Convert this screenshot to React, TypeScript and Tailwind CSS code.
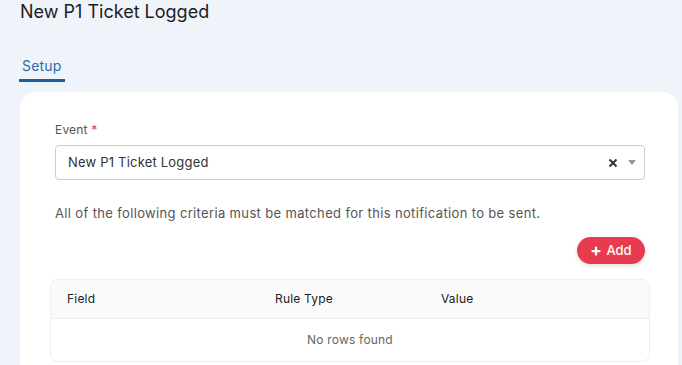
import { Plus } from "lucide-react";

export default function App() {
  return (
    <div
      className="h-[365px] w-[682px] overflow-hidden bg-[#eff3fa] text-[#222]"
      style={{ fontFamily: "Inter, 'Noto Sans', sans-serif" }}
    >
      <h1 className="pl-5 pt-[1px] text-[18px] leading-[22px] text-[#1d1d1d]">New P1 Ticket Logged</h1>

      <div className="mt-[30px] pl-[19px]">
        <div className="inline-block w-[46px] border-b-[3px] border-[#1f5f9e] pb-[3px] pl-[3px] text-[14px] leading-[20px] tracking-[0.2px] text-[#2b6cab]">
          Setup
        </div>
      </div>

      <div className="ml-5 mr-1 mt-[10px] h-[300px] rounded-2xl bg-white pl-[35px] pr-[33px] pt-[30px]">
        <label className="block text-[12px] leading-[16px] tracking-[0.2px] text-[#555]">
          Event <span className="text-[#e2344a]">*</span>
        </label>
        <div className="mt-[7px] flex h-[35px] items-center rounded border border-[#cccccc] pl-3 pr-2">
          <span className="flex-1 text-[13px] tracking-[0.2px] text-[#333]">New P1 Ticket Logged</span>
          <svg width="10" height="10" viewBox="0 0 10 10" className="text-[#333]">
            <path d="M1.5 1.5l7 7M8.5 1.5l-7 7" stroke="currentColor" strokeWidth="2" />
          </svg>
          <span className="ml-[10px] h-0 w-0 border-x-[4px] border-t-[5px] border-x-transparent border-t-[#999]" />
        </div>

        <p className="mt-[24px] text-[13px] leading-[18px] tracking-[0.35px] text-[#555]">
          All of the following criteria must be matched for this notification to be sent.
        </p>

        <div className="mt-[15px] flex justify-end">
          <button className="flex h-[27px] w-[68px] items-center justify-center gap-1 rounded-full bg-[#e93b4f] text-[13px] font-medium text-white shadow-[0_2px_4px_rgba(0,0,0,0.12)]">
            <Plus size={12} strokeWidth={4.5} />
            Add
          </button>
        </div>

        <div className="-mx-[5px] mt-[15px] overflow-hidden rounded-lg border border-[#eeeeee]">
          <div className="grid h-[39px] grid-cols-[208px_166px_1fr] items-center border-b border-[#eeeeee] bg-[#fafafa] pl-4 text-[12px] tracking-[0.2px] text-[#222]">
            <span>Field</span>
            <span>Rule Type</span>
            <span>Value</span>
          </div>
          <div className="flex h-[42px] items-center justify-center text-[12px] tracking-[0.2px] text-[#666]">
            No rows found
          </div>
        </div>
      </div>
    </div>
  );
}
